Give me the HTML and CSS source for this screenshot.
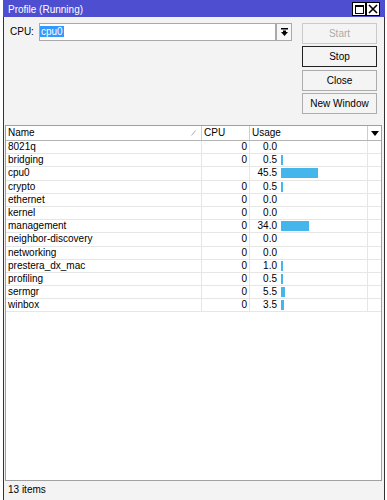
FILE: index.html
```html
<!DOCTYPE html>
<html lang="en">
<head>
  <meta charset="UTF-8">
  <meta name="viewport" content="width=device-width, initial-scale=1.0">
  <title>Profile (Running)</title>
  <link rel="stylesheet" href="styles.css">
</head>
<body>

  <div class="window">
    <!-- Barra de título -->
    <div class="titlebar">
      <span class="title">Profile (Running)</span>
      <div class="title-buttons">
        <span class="tbtn">
          <svg width="9" height="9" viewBox="0 0 9 9"><rect x="0.5" y="0.5" width="8" height="8" fill="#fff" stroke="#000"/><line x1="0" y1="1.5" x2="9" y2="1.5" stroke="#000"/></svg>
        </span>
        <span class="tbtn">
          <svg width="10" height="10" viewBox="0 0 10 10"><path d="M1 1 L9 9 M9 1 L1 9" stroke="#000" stroke-width="1.6"/></svg>
        </span>
      </div>
    </div>

    <div class="content">
      <div class="top">
        <div class="cpu-field">
          <span class="cpu-label">CPU:</span>
          <div class="combo"><span class="sel">cpu0</span></div>
          <span class="combo-btn">
            <svg width="7" height="8" viewBox="0 0 7 8"><rect x="0" y="0" width="7" height="1.5" fill="#000"/><rect x="2" y="2.5" width="3" height="2" fill="#000"/><polygon points="0,4 7,4 3.5,8" fill="#000"/></svg>
          </span>
        </div>
        <div class="actions">
          <button class="btn" disabled>Start</button>
          <button class="btn default">Stop</button>
          <button class="btn">Close</button>
          <button class="btn">New Window</button>
        </div>
      </div>

      <!-- Tabela -->
      <div class="table">
        <div class="head">
          <div class="name-head">Name
            <svg class="sort" width="5" height="6" viewBox="0 0 5 6"><line x1="0.5" y1="5.5" x2="4.5" y2="0.5" stroke="#b0b0b0"/></svg>
          </div>
          <div>CPU</div>
          <div>Usage</div>
          <div class="menu-head"><span class="down"></span></div>
        </div>

        <div class="row"><div>8021q</div><div class="cpu">0</div><div class="usage"><span class="val">0.0</span></div><div></div></div>
        <div class="row"><div>bridging</div><div class="cpu">0</div><div class="usage"><span class="val">0.5</span><span class="bar" style="width:2px"></span></div><div></div></div>
        <div class="row"><div>cpu0</div><div class="cpu"></div><div class="usage"><span class="val">45.5</span><span class="bar" style="width:37px"></span></div><div></div></div>
        <div class="row"><div>crypto</div><div class="cpu">0</div><div class="usage"><span class="val">0.5</span><span class="bar" style="width:2px"></span></div><div></div></div>
        <div class="row"><div>ethernet</div><div class="cpu">0</div><div class="usage"><span class="val">0.0</span></div><div></div></div>
        <div class="row"><div>kernel</div><div class="cpu">0</div><div class="usage"><span class="val">0.0</span></div><div></div></div>
        <div class="row"><div>management</div><div class="cpu">0</div><div class="usage"><span class="val">34.0</span><span class="bar" style="width:28px"></span></div><div></div></div>
        <div class="row"><div>neighbor-discovery</div><div class="cpu">0</div><div class="usage"><span class="val">0.0</span></div><div></div></div>
        <div class="row"><div>networking</div><div class="cpu">0</div><div class="usage"><span class="val">0.0</span></div><div></div></div>
        <div class="row"><div>prestera_dx_mac</div><div class="cpu">0</div><div class="usage"><span class="val">1.0</span><span class="bar" style="width:2px"></span></div><div></div></div>
        <div class="row"><div>profiling</div><div class="cpu">0</div><div class="usage"><span class="val">0.5</span><span class="bar" style="width:2px"></span></div><div></div></div>
        <div class="row"><div>sermgr</div><div class="cpu">0</div><div class="usage"><span class="val">5.5</span><span class="bar" style="width:4px"></span></div><div></div></div>
        <div class="row"><div>winbox</div><div class="cpu">0</div><div class="usage"><span class="val">3.5</span><span class="bar" style="width:3px"></span></div><div></div></div>
      </div>

      <div class="status">13 items</div>
    </div>
  </div>

</body>
</html>
```

FILE: styles.css
```css
/* Janela de perfil estilo WinBox */
* {
  box-sizing: border-box;
}

body {
  margin: 0;
  background-color: #fff;
  font-family: "Liberation Sans", Arial, sans-serif;
  font-size: 10px;
  color: #000;
}

.window {
  margin-left: 3px;
  width: 382px;
  height: 500px;
  display: flex;
  flex-direction: column;
}

.titlebar {
  height: 17px;
  padding: 0 5px;
  background-color: #4e4ed0;
  color: #fff;
  display: flex;
  justify-content: space-between;
}

.title {
  padding-top: 3px;
  line-height: 14px;
}

.title-buttons {
  display: flex;
  padding-top: 2px;
}

.tbtn {
  width: 14px;
  height: 14px;
  border: 1px solid #000;
  background-color: #fff;
  display: flex;
  align-items: center;
  justify-content: center;
}

.content {
  flex: 1;
  display: flex;
  flex-direction: column;
  background-color: #f3f3f3;
  border-left: 1px solid #333;
  border-right: 1px solid #333;
}

.top {
  height: 108px;
  padding: 6px 7px 0 6px;
  display: flex;
  gap: 10px;
}

.cpu-field {
  flex: 1;
  display: flex;
  height: 18px;
}

.cpu-label {
  width: 29px;
  line-height: 18px;
}

.combo {
  flex: 1;
  border: 1px solid #a9a9a9;
  background-color: #fff;
  line-height: 16px;
}

.sel {
  background-color: #3399ff;
  color: #fff;
  padding: 0 1px;
}

.combo-btn {
  width: 16px;
  border: 1px solid #a9a9a9;
  background-color: #f7f7f7;
  display: flex;
  align-items: center;
  justify-content: center;
}

.actions {
  width: 75px;
  display: flex;
  flex-direction: column;
  gap: 2.4px;
}

.btn {
  height: 21px;
  padding: 0;
  border: 1px solid #acacac;
  background-color: #f4f4f4;
  font-family: inherit;
  font-size: 10px;
  line-height: 19px;
  color: #000;
  text-align: center;
}

.btn:disabled {
  border-color: #cacaca;
  color: #ababab;
}

.btn.default {
  border-color: #222;
}

.table {
  flex: 1;
  margin: 0 2px 0 1px;
  border: 1px solid #a0a0a0;
  background-color: #fff;
}

.head,
.row {
  display: grid;
  grid-template-columns: 196px 48px 118px 13px;
}

.head {
  height: 15px;
  border-bottom: 1px solid #b4b4b4;
  line-height: 14px;
}

.head > div {
  padding-left: 2px;
  border-right: 1px solid #cdcdcd;
}

.head > div:last-child {
  border-right: 0;
}

.name-head {
  display: flex;
  align-items: center;
}

.sort {
  margin-left: auto;
  margin-right: 5px;
}

.menu-head {
  display: flex;
  align-items: center;
  justify-content: center;
}

.down {
  width: 0;
  height: 0;
  border-left: 4px solid transparent;
  border-right: 4px solid transparent;
  border-top: 5px solid #000;
  margin-left: -2px;
}

.row {
  height: 13.2px;
  border-bottom: 1px solid #e6e6e6;
  line-height: 12px;
}

.row > div {
  padding-left: 2px;
  border-right: 1px solid #e6e6e6;
  white-space: nowrap;
}

.row > div:last-child {
  border-right: 0;
}

.row > .cpu {
  padding: 0 2px 0 0;
  text-align: right;
}

.row > .usage {
  padding: 0;
  display: flex;
  align-items: flex-start;
}

.val {
  width: 27px;
  text-align: right;
}

.bar {
  height: 10px;
  margin: 1px 0 0 4px;
  background-color: #44b6ec;
}

.status {
  height: 19px;
  padding: 2px 0 0 4px;
  line-height: 13px;
}
```
